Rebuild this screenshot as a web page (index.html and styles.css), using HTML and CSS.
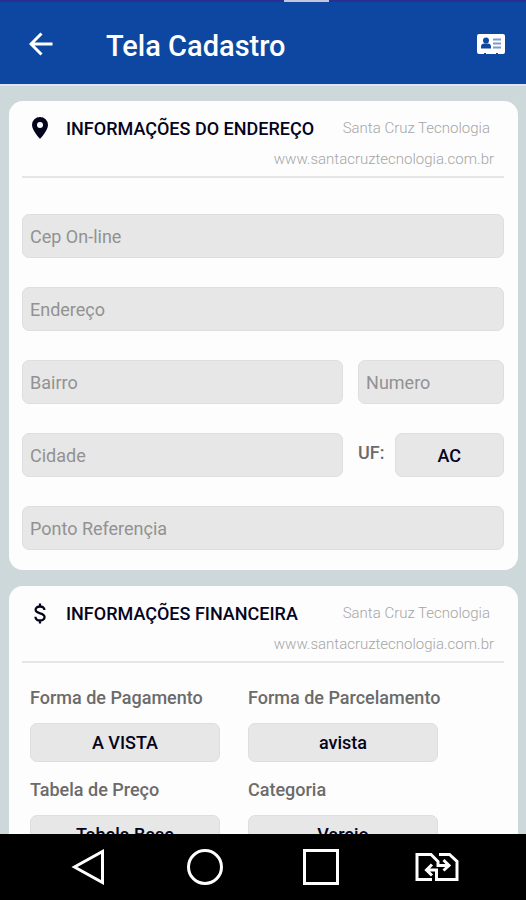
FILE: index.html
```html
<!DOCTYPE html>
<html lang="pt-BR">
<head>
<meta charset="UTF-8">
<meta name="viewport" content="width=device-width, initial-scale=1.0">
<title>Tela Cadastro</title>
<link rel="stylesheet" href="styles.css">
</head>
<body>
    <div class="status"><span class="status-tab"></span></div>
    <header class="topbar">
        <button class="icon-btn" type="button" aria-label="Voltar">
            <svg width="24" height="24" viewBox="0 0 24 24" fill="none" stroke="#fff" stroke-width="3"><path d="M23.5 12H2.5M12.5 1.5L2 12l10.500 10.500"/></svg>
        </button>
        <h1>Tela Cadastro</h1>
        <button class="icon-btn" type="button" aria-label="Cartão do cliente">
            <svg width="28" height="22" viewBox="0 0 28 22">
                <path fill="#fff" d="M2 1h24a2 2 0 0 1 2 2v16a2 2 0 0 1-2 2h-5v-1h-2v1H9v-1H7v1H2a2 2 0 0 1-2-2V3a2 2 0 0 1 2-2z"/>
                <circle cx="9" cy="7.500" r="3" fill="#0d47a1"/>
                <path fill="#0d47a1" d="M4 15.500v-2c0-2 1.500-3 3-3h4c1.500 0 3 1 3 3v2z"/>
                <path stroke="#7f97c9" stroke-width="2" d="M16 6.500h8M16 10.500h8M16 14.500h8"/>
            </svg>
        </button>
    </header>

    <main>
        <section class="card">
            <div class="card-head">
                <div class="card-title">
                    <svg width="18" height="24" viewBox="0 0 18 24"><path fill="#04041c" fill-rule="evenodd" d="M9 1a8 8 0 0 0-8 8c0 5.500 8 14 8 14s8-8.500 8-14a8 8 0 0 0-8-8zm0 5a3 3 0 1 1 0 6 3 3 0 0 1 0-6z"/></svg>
                    <h2>INFORMAÇÕES DO ENDEREÇO</h2>
                    <span class="brand">Santa Cruz Tecnologia</span>
                </div>
                <p class="site">www.santacruztecnologia.com.br</p>
            </div>
            <form class="fields">
                <input type="text" placeholder="Cep On-line" aria-label="Cep On-line">
                <input type="text" placeholder="Endereço" aria-label="Endereço">
                <div class="row">
                    <input type="text" placeholder="Bairro" aria-label="Bairro">
                    <input type="text" placeholder="Numero" aria-label="Numero">
                </div>
                <div class="row">
                    <input type="text" placeholder="Cidade" aria-label="Cidade">
                    <div class="uf">
                        <label for="uf">UF:</label>
                        <select id="uf">
                            <option>AC</option>
                        </select>
                    </div>
                </div>
                <input type="text" placeholder="Ponto Referençia" aria-label="Ponto Referençia">
            </form>
        </section>

        <section class="card">
            <div class="card-head">
                <div class="card-title">
                    <svg width="18" height="21" viewBox="0 0 18 24" fill="none" stroke="#04041c" stroke-width="2.600"><path d="M14 8c0-2.500-2-4-5-4S4 5.500 4 7.800c0 5 10.200 3 10.200 8 0 2.500-2.200 4.200-5.200 4.200s-5.200-1.500-5.200-4.200M9 .5V4M9 20v3.500"/></svg>
                    <h2>INFORMAÇÕES FINANCEIRA</h2>
                    <span class="brand">Santa Cruz Tecnologia</span>
                </div>
                <p class="site">www.santacruztecnologia.com.br</p>
            </div>
            <form class="options">
                <div class="option">
                    <label for="pagamento">Forma de Pagamento</label>
                    <select id="pagamento">
                        <option>A VISTA</option>
                    </select>
                </div>
                <div class="option">
                    <label for="parcelamento">Forma de Parcelamento</label>
                    <select id="parcelamento">
                        <option>avista</option>
                    </select>
                </div>
                <div class="option">
                    <label for="tabela">Tabela de Preço</label>
                    <select id="tabela">
                        <option>Tabela Base</option>
                    </select>
                </div>
                <div class="option">
                    <label for="categoria">Categoria</label>
                    <select id="categoria">
                        <option>Varejo</option>
                    </select>
                </div>
            </form>
        </section>
    </main>

    <nav class="navbar">
        <button type="button" aria-label="Voltar">
            <svg width="36" height="36" viewBox="0 0 36 36"><path d="M31.500 2.500v31L3.500 18z"/></svg>
        </button>
        <button type="button" aria-label="Início">
            <svg width="36" height="36" viewBox="0 0 36 36"><circle cx="18" cy="18" r="16.500"/></svg>
        </button>
        <button type="button" aria-label="Recentes">
            <svg width="36" height="36" viewBox="0 0 36 36"><path d="M1.500 1.500h33v33h-33z"/></svg>
        </button>
        <button type="button" aria-label="Trocar chip">
            <svg width="44" height="30" viewBox="0 0 44 30"><path d="M17 27.500H2V2.500h14l7 7v4h10M28.500 8l5.500 5.500-5.500 5M24 2.500h10.500l7.500 7v18H21.500V18H12M17 12.500L11.500 18l5.500 5.500"/></svg>
        </button>
    </nav>
</body>
</html>
```

FILE: styles.css
```css
* {
    box-sizing: border-box;
}
body {
    margin: 0;
    height: 100vh;
    display: flex;
    flex-direction: column;
    background: #cdd8da;
    font-family: Roboto, "Liberation Sans", sans-serif;
    overflow: hidden;
}
h1, h2, p {
    margin: 0;
}
button {
    background: none;
    border: 0;
    padding: 0;
}
svg {
    display: block;
}

/* top */
.status {
    flex: none;
    height: 2px;
    background: #2a2f93;
    padding-left: 54%;
}
.status-tab {
    display: block;
    width: 45px;
    height: 2px;
    background: #c3c6dc;
}
.topbar {
    flex: none;
    height: 84px;
    display: flex;
    align-items: center;
    padding: 2px 21px 0 29px;
    background: #0d47a1;
    border-bottom: 2px solid #e2e3f0;
    color: #fff;
}
.topbar h1 {
    flex: 1;
    padding: 4px 0 0 53px;
    font-size: 29px;
    line-height: 34px;
    font-weight: 500;
}

/* cards */
main {
    flex: 1;
    min-height: 0;
    overflow: hidden;
    padding: 15px 8px 0 9px;
}
.card {
    background: #fdfdfd;
    border-radius: 14px;
    padding: 0 14px 20px 13px;
    margin-bottom: 16px;
}
.card-head {
    padding-top: 12px;
    border-bottom: 2px solid #e6e6e6;
}
.card-title {
    display: flex;
    align-items: center;
    height: 30px;
    padding: 0 14px 0 9px;
}
.card-title h2 {
    flex: 1;
    padding-left: 17px;
    font-size: 18px;
    font-weight: 500;
    color: #04041c;
    white-space: nowrap;
}
.brand, .site {
    font-size: 15px;
    font-weight: 300;
    color: #a6a6a6;
    white-space: nowrap;
}
.site {
    height: 33px;
    line-height: 32px;
    padding-right: 10px;
    text-align: right;
}

/* form controls */
input, select {
    width: 100%;
    min-width: 0;
    height: 44px;
    margin: 0;
    border: 1px solid #dedede;
    border-radius: 7px;
    background: #e7e7e7;
    font-family: inherit;
    font-size: 18px;
    color: #04041c;
}
input {
    padding: 0 7px;
}
input::placeholder {
    color: #929292;
    opacity: 1;
}
select {
    appearance: none;
    padding: 0;
    font-weight: 500;
    text-align: center;
    text-align-last: center;
}
label {
    font-size: 18px;
    line-height: 22px;
    font-weight: 500;
    color: #6b6b6b;
    white-space: nowrap;
}
.fields {
    display: grid;
    gap: 29px;
    padding-top: 36px;
}
.row {
    display: grid;
    grid-template-columns: 11fr 5fr;
    gap: 15px;
}
.uf {
    display: flex;
    gap: 10px;
}
.uf label {
    padding-top: 9px;
}
.options {
    display: grid;
    grid-template-columns: repeat(2, minmax(0, 1fr));
    gap: 17px 28px;
    padding: 24px 66px 0 8px;
}
.option select {
    display: block;
    height: 39px;
    margin-top: 14px;
}

/* android bar */
.navbar {
    flex: none;
    height: 66px;
    display: flex;
    justify-content: center;
    align-items: center;
    gap: 68px;
    background: #000;
}
.navbar button {
    width: 48px;
    display: flex;
    justify-content: center;
}
.navbar svg {
    fill: none;
    stroke: #fff;
    stroke-width: 3;
}
```
